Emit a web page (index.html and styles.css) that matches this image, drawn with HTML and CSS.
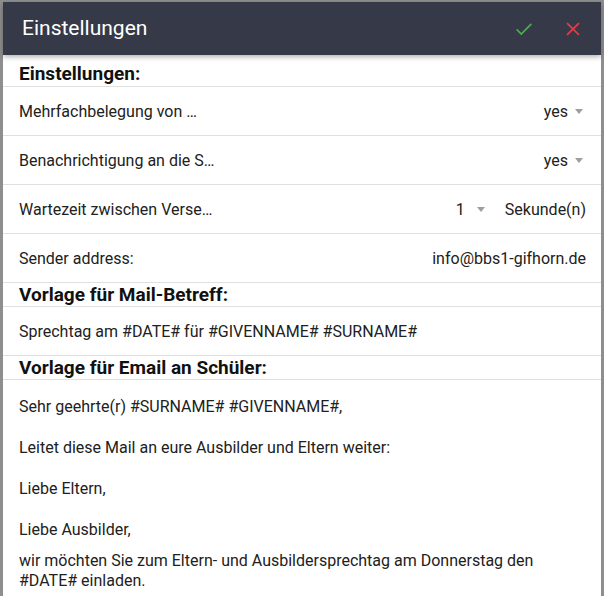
FILE: index.html
```html
<!DOCTYPE html>
<html lang="de">
<head>
  <meta charset="UTF-8" />
  <title>Einstellungen</title>
  <link rel="stylesheet" href="styles.css">
</head>
<body>

<div class="dialog">
  <!-- Title bar -->
  <div class="toolbar">
    <span class="title">Einstellungen</span>
    <span class="actions">
      <svg class="icon ok" viewBox="0 0 24 24" width="22" height="22"><path d="M4 12.5l5 5L20 6.5" fill="none" stroke="#4caf50" stroke-width="1.8"/></svg>
      <svg class="icon cancel" viewBox="0 0 24 24" width="22" height="22"><path d="M5.5 5.5l13 13M18.5 5.5l-13 13" fill="none" stroke="#e53945" stroke-width="2"/></svg>
    </span>
  </div>

  <div class="content">
    <div class="heading first">Einstellungen:</div>

    <div class="row">
      <span class="label">Mehrfachbelegung von …</span>
      <span class="select">yes <span class="caret"></span></span>
    </div>
    <div class="row">
      <span class="label">Benachrichtigung an die S…</span>
      <span class="select">yes <span class="caret"></span></span>
    </div>
    <div class="row">
      <span class="label">Wartezeit zwischen Verse…</span>
      <span class="select num">1 <span class="caret"></span></span>
      <span class="unit">Sekunde(n)</span>
    </div>
    <div class="row">
      <span class="label">Sender address:</span>
      <span class="value">info@bbs1-gifhorn.de</span>
    </div>

    <div class="heading">Vorlage für Mail-Betreff:</div>
    <div class="row">
      <span class="label">Sprechtag am #DATE# für #GIVENNAME# #SURNAME#</span>
    </div>

    <div class="heading">Vorlage für Email an Schüler:</div>
    <div class="mailtext">
      <p>Sehr geehrte(r) #SURNAME# #GIVENNAME#,</p>
      <p>Leitet diese Mail an eure Ausbilder und Eltern weiter:</p>
      <p>Liebe Eltern,</p>
      <p>Liebe Ausbilder,</p>
      <p>wir möchten Sie zum Eltern- und Ausbildersprechtag am Donnerstag den<br>#DATE# einladen.</p>
    </div>
  </div>
</div>

</body>
</html>
```

FILE: styles.css
```css
html, body {
  margin: 0;
  height: 100%;
  overflow: hidden;
}
body {
  font-family: Roboto, "Noto Sans", sans-serif;
  background: #8e8e8e;
  color: #212121;
}
.dialog {
  height: 594px;
  margin: 2px 3px 0 3px;
  background: #fff;
  display: flex;
  flex-direction: column;
}
.toolbar {
  height: 53px;
  flex: none;
  background: #363a48;
  display: flex;
  align-items: center;
  justify-content: space-between;
  padding: 0 17px 0 19px;
  box-shadow: 0 2px 5px rgba(0, 0, 0, 0.3);
  position: relative;
  z-index: 1;
}
.title {
  color: #fff;
  font-size: 21px;
  margin-top: -1px;
}
.actions {
  display: flex;
  gap: 27px;
  align-items: center;
}
.icon {
  display: block;
}
.content {
  flex: 1;
  overflow: hidden;
}
.heading {
  font-size: 19px;
  font-weight: bold;
  color: #111;
  padding: 0 16px;
  height: 23px;
  line-height: 23px;
  border-bottom: 1px solid #e0e0e0;
}
.heading.first {
  height: 29px;
  line-height: 34px;
  padding-top: 2px;
}
.row {
  height: 48px;
  display: flex;
  align-items: center;
  padding: 0 15px 0 16px;
  border-bottom: 1px solid #e0e0e0;
  font-size: 16px;
}
.label {
  flex: 1;
}
.select {
  display: flex;
  align-items: center;
}
.caret {
  width: 0;
  height: 0;
  border-left: 4px solid transparent;
  border-right: 4px solid transparent;
  border-top: 5px solid #9e9e9e;
  margin-left: 7px;
  margin-right: 3px;
}
.num .caret {
  margin-left: 12px;
}
.unit {
  margin-left: 17px;
}
.mailtext {
  padding: 17px 16px 0 16px;
  font-size: 16px;
  line-height: 20px;
}
.mailtext p {
  margin: 0 0 21px 0;
}
.mailtext p:nth-child(4) {
  margin-bottom: 11px;
}
```
